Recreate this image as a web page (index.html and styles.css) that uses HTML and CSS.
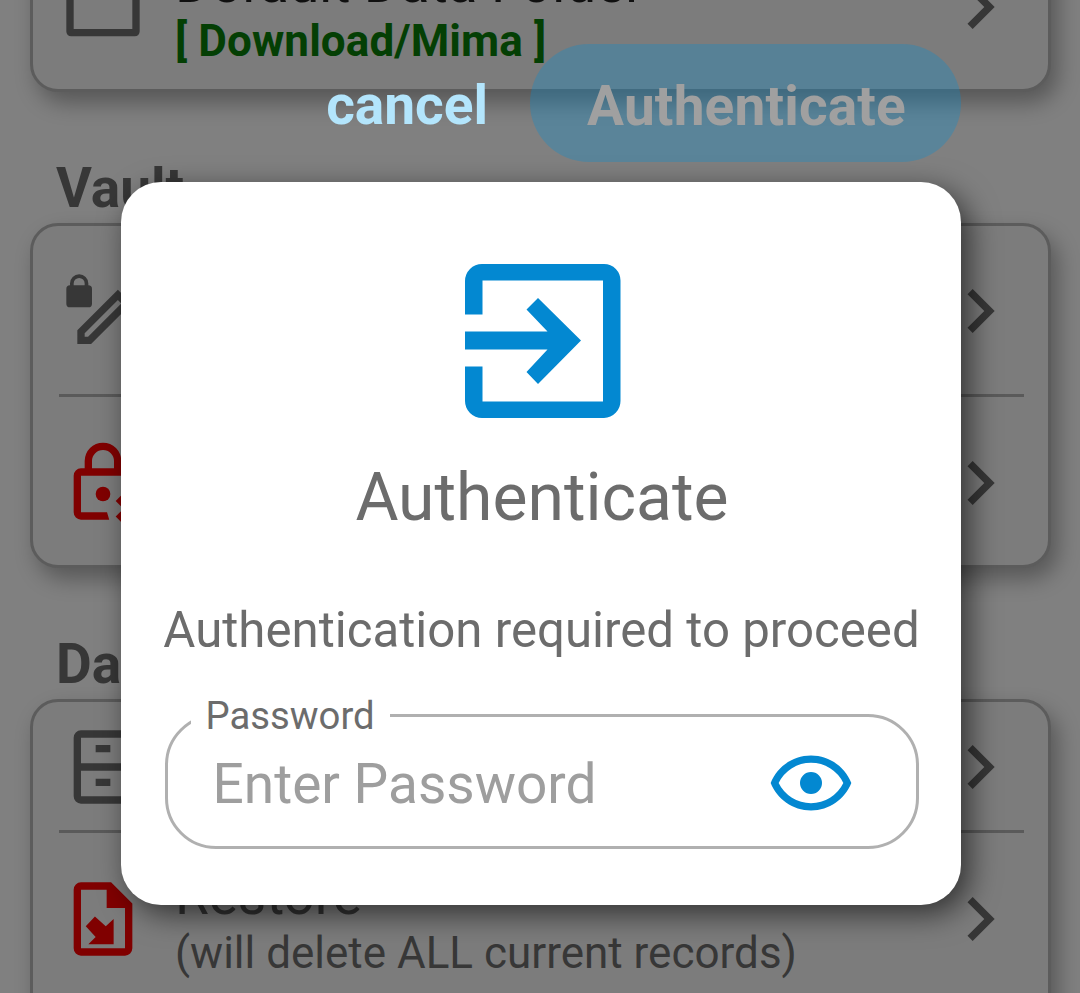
FILE: index.html
```html
<!DOCTYPE html>
<html lang="en">
<head>
<meta charset="utf-8">
<title>Authenticate</title>
<link rel="stylesheet" href="styles.css">
</head>
<body>
<div class="screen">
  <main class="settings">
    <section class="card card-folder">
      <div class="row">
        <svg class="icon" viewBox="0 0 24 24"><path d="M20 18H4V8h16m0-2h-8l-2-2H4a2 2 0 0 0-2 2v12.700a1.300 1.300 0 0 0 1.300 1.300h17.400a1.300 1.300 0 0 0 1.300-1.300V8a2 2 0 0 0-2-2z"/></svg>
        <div class="row-text">
          <div class="row-title">Default Data Folder</div>
          <div class="row-path">[ Download/Mima ]</div>
        </div>
        <svg class="icon" viewBox="0 0 24 24"><path d="M8.590 16.580 13.170 12 8.590 7.410 10 6l6 6-6 6z"/></svg>
      </div>
    </section>
    <h2 class="heading">Vault</h2>
    <section class="card card-vault">
      <div class="row">
        <svg class="icon" viewBox="0 0 24 24"><path d="M16.060 9 17 9.940 7.920 19H7v-.92L16.060 9m3.600-6c-.25 0-.51.1-.7.290l-1.830 1.830 3.750 3.750 1.830-1.830c.39-.39.39-1.040 0-1.410l-2.340-2.340c-.2-.2-.45-.29-.71-.29m-3.600 3.190L5 17.250V21h3.750L19.810 9.940z"/><path d="M8 5v-.5a2.500 2.500 0 0 0-5 0V5a1 1 0 0 0-1 1v4a1 1 0 0 0 1 1h5a1 1 0 0 0 1-1V6a1 1 0 0 0-1-1M7 5H4v-.5a1.500 1.500 0 0 1 3 0z"/></svg>
        <svg class="icon" viewBox="0 0 24 24"><path d="M8.590 16.580 13.170 12 8.590 7.410 10 6l6 6-6 6z"/></svg>
      </div>
      <hr class="divider">
      <div class="row row-tall">
        <svg class="icon icon-danger" viewBox="0 0 24 24"><path d="M13.700 22H6a2 2 0 0 1-2-2V10a2 2 0 0 1 2-2h1V6a5 5 0 0 1 10 0v2h1a2 2 0 0 1 2 2v4h-2v-4H6v10h7.100zM9 8h6V6a3 3 0 0 0-6 0z"/><circle cx="12" cy="15" r="2"/><path d="m22.540 16.880-1.420-1.420L19 17.590l-2.120-2.130-1.420 1.420L17.590 19l-2.130 2.120 1.420 1.420L19 20.410l2.120 2.130 1.420-1.420L20.410 19z"/></svg>
        <svg class="icon" viewBox="0 0 24 24"><path d="M8.590 16.580 13.170 12 8.590 7.410 10 6l6 6-6 6z"/></svg>
      </div>
    </section>
    <h2 class="heading">Data</h2>
    <section class="card card-data">
      <div class="row row-short">
        <svg class="icon" viewBox="0 0 24 24"><path d="M10 6h4v2h-4zm0 9.200h4v2h-4zM20 4v16a2 2 0 0 1-2 2H6a2 2 0 0 1-2-2V4a2 2 0 0 1 2-2h12a2 2 0 0 1 2 2M6 4v7h12V4zm12 16v-7H6v7z"/></svg>
        <svg class="icon" viewBox="0 0 24 24"><path d="M8.590 16.580 13.170 12 8.590 7.410 10 6l6 6-6 6z"/></svg>
      </div>
      <hr class="divider">
      <div class="row row-restore">
        <svg class="icon icon-danger" viewBox="0 0 24 24"><path d="M14.200 2H6a2 2 0 0 0-2 2v16a2 2 0 0 0 2 2h12a2 2 0 0 0 2-2V7.800zM18 20H6V4h7v5h5z"/><path d="M9.800 11.300 12.750 14 14.900 12v6.900H8l2-2-2.700-2.900z"/></svg>
        <div class="row-text">
          <div class="row-title">Restore</div>
          <div class="row-note">(will delete ALL current records)</div>
        </div>
        <svg class="icon" viewBox="0 0 24 24"><path d="M8.590 16.580 13.170 12 8.590 7.410 10 6l6 6-6 6z"/></svg>
      </div>
    </section>
  </main>

  <div class="overlay">
    <div class="actions">
      <span class="cancel">cancel</span>
      <span class="confirm">Authenticate</span>
    </div>
    <div class="dialog">
      <svg class="enter-icon" viewBox="0 0 156 154"><path d="M0 50.500V17A17 17 0 0 1 17 0H139A16.500 16.500 0 0 1 155.500 17V137A17 17 0 0 1 139 154H17A17 17 0 0 1 0 137V102.500H17.500V137.500H138V16.500H17.500V50.500z"/><path d="M0 67.500H82.500L61.500 45.500 73 34 116 76.500 73 120 61.500 108 82.500 85.500H0z"/></svg>
      <h1 class="title">Authenticate</h1>
      <p class="message">Authentication required to proceed</p>
      <fieldset class="field">
        <legend class="label">Password</legend>
        <div class="field-row">
          <span class="placeholder">Enter Password</span>
          <svg class="eye" viewBox="0 0 24 24"><path d="M12 9a3 3 0 1 1 0 6 3 3 0 0 1 0-6m0-4.500c5 0 9.270 3.110 11 7.500-1.730 4.390-6 7.500-11 7.500S2.730 16.390 1 12c1.730-4.390 6-7.500 11-7.500M3.180 12a9.821 9.821 0 0 0 17.640 0 9.821 9.821 0 0 0-17.640 0z"/></svg>
        </div>
      </fieldset>
    </div>
  </div>
</div>
</body>
</html>
```
FILE: styles.css
```css
* { box-sizing: border-box; }
body { margin: 0; font-family: Roboto, "Liberation Sans", sans-serif; }
svg { display: block; flex: none; }

.screen {
  position: relative;
  width: 1080px;
  height: 993px;
  overflow: hidden;
  background: #808080;
}

.settings {
  height: 993px;
  padding: 0 29px 0 30px;
  overflow: hidden;
  color: #373737;
}
.card {
  border: 3px solid #5c5c5c;
  border-radius: 28px;
  background: #7c7c7c;
  box-shadow: 7px 11px 22px rgba(0, 0, 0, .32);
}
.card-folder { height: 232px; margin-top: -140px; padding-top: 51px; }
.card-vault { height: 345px; }
.card-data { height: 360px; }

.heading {
  height: 131px;
  margin: 0;
  padding: 64px 0 0 26px;
  font-size: 55px;
  font-weight: 700;
  line-height: 64px;
}
.row {
  display: flex;
  align-items: center;
  justify-content: space-between;
  height: 168px;
  padding: 2px 24px 0 26px;
}
.row-tall { height: 172px; padding-top: 0; }
.row-short { height: 128px; padding-top: 2px; }
.row-restore { height: 171px; padding-top: 0; }
.row-text { flex: 1; padding-left: 28px; white-space: nowrap; }
.row-restore .row-text { padding-top: 4px; }
.card-folder .row { height: 184px; }
.row-title { font-size: 55px; line-height: 60px; color: #101010; letter-spacing: -.1px; }
.row-restore .row-title { color: #333; }
.row-path {
  margin-bottom: -4px;
  padding-top: 4px;
  font-size: 44px;
  font-weight: 700;
  line-height: 48px;
  letter-spacing: .1px;
  color: #043f04;
}
.row-note { margin-bottom: -2px; padding-top: 2px; font-size: 44px; line-height: 52px; }
.icon { width: 88px; height: 88px; fill: #373737; }
.icon-danger { fill: #800000; }
.divider { height: 3px; margin: 0 24px 0 26px; border: 0; background: #5a5a5a; }

.overlay {
  position: absolute;
  inset: 0;
  padding: 44px 119px 0 121px;
}
.actions {
  display: flex;
  align-items: center;
  justify-content: flex-end;
  gap: 42px;
  height: 118px;
  font-size: 55px;
  font-weight: 700;
  line-height: 125px;
}
.cancel { padding-top: 5px; color: #b3e5fc; }
.confirm {
  width: 431px;
  height: 118px;
  padding-left: 2px;
  border-radius: 59px;
  background: rgba(3, 144, 211, .3);
  color: #a0a0a0;
  letter-spacing: .15px;
  line-height: 124px;
  text-align: center;
}
.dialog {
  display: flex;
  flex-direction: column;
  align-items: center;
  height: 723px;
  margin-top: 20px;
  padding-top: 82px;
  border-radius: 40px;
  background: #fff;
  box-shadow: 8px 9px 30px rgba(0, 0, 0, .6);
  color: #6c6c6c;
}
.enter-icon { width: 156px; height: 154px; margin-left: 3px; fill: #0388d1; }
.title { margin: 41px 0 0 2px; font-size: 66px; font-weight: 400; line-height: 77px; }
.message { margin: 65px 0 0 1px; font-size: 49.200px; line-height: 58px; white-space: nowrap; }
.field {
  width: 754px;
  height: 156px;
  margin: 34px 0 0 1px;
  padding: 0 61px 0 23px;
  border: 3px solid #b0b0b0;
  border-radius: 51px;
}
.label { padding: 0 15px; font-size: 38.300px; line-height: 45px; }
.field-row {
  display: flex;
  align-items: center;
  justify-content: space-between;
  height: 90px;
  padding-left: 22px;
}
.placeholder { padding-top: 2px; font-size: 55px; color: #9e9e9e; }
.eye { width: 88px; height: 88px; fill: #0388d1; }
```
